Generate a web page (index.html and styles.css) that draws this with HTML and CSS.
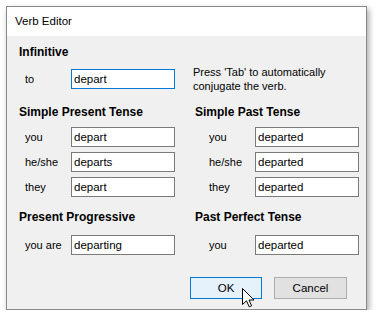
FILE: index.html
```html
<!DOCTYPE html>
<html>
<head>
<meta charset="utf-8">
<link rel="stylesheet" href="styles.css">
</head>
<body>
<div class="window">
  <div class="titlebar">Verb Editor</div>
  <div class="content">
    <div class="section sec-inf">
      <div class="heading">Infinitive</div>
      <div></div>
      <div class="field"><span class="lbl">to</span><input class="box focus" value="depart"></div>
      <div class="note">Press 'Tab' to automatically<br>conjugate the verb.</div>
    </div>
    <div class="section sec-simple">
      <div class="heading">Simple Present Tense</div>
      <div class="heading right">Simple Past Tense</div>
      <div class="field"><span class="lbl">you</span><input class="box" value="depart"></div>
      <div class="field right"><span class="lbl">you</span><input class="box" value="departed"></div>
      <div class="field"><span class="lbl">he/she</span><input class="box" value="departs"></div>
      <div class="field right"><span class="lbl">he/she</span><input class="box" value="departed"></div>
      <div class="field"><span class="lbl">they</span><input class="box" value="depart"></div>
      <div class="field right"><span class="lbl">they</span><input class="box" value="departed"></div>
    </div>
    <div class="section sec-prog">
      <div class="heading">Present Progressive</div>
      <div class="heading right">Past Perfect Tense</div>
      <div class="field"><span class="lbl">you are</span><input class="box" value="departing"></div>
      <div class="field right"><span class="lbl">you</span><input class="box" value="departed"></div>
    </div>
    <div class="buttons">
      <button class="btn default">OK</button>
      <button class="btn">Cancel</button>
    </div>
  </div>
</div>
<svg class="cursor" width="14" height="21" viewBox="0 0 14 21">
  <path d="M0.5 0.5 L0.5 16.5 L4.5 12.8 L7.2 18.8 L9.6 17.8 L7 12 L12 12 Z" fill="#fff" stroke="#000" stroke-width="1" stroke-linejoin="miter"/>
</svg>
</body>
</html>
```
FILE: styles.css
```css
html, body {
  margin: 0;
  padding: 0;
  background: #ffffff;
  font-family: "Liberation Sans", Arial, sans-serif;
  font-size: 11px;
  color: #000;
}

.window {
  position: relative;
  margin: 6px 0 0 6px;
  width: 361px;
  height: 304px;
  box-sizing: border-box;
  border: 1px solid #8a8a8a;
  background: #f0f0f0;
  box-shadow: 2px 3px 6px rgba(0, 0, 0, 0.35);
  display: flex;
  flex-direction: column;
}

.titlebar {
  height: 29px;
  line-height: 29px;
  background: #ffffff;
  padding-left: 8px;
  font-size: 11.5px;
}

.content {
  padding: 8px 19px 0 12px;
}

.section {
  display: grid;
  grid-template-columns: 176px 1fr;
  row-gap: 5px;
}

.heading {
  font-weight: bold;
  font-size: 12px;
  height: 16px;
  line-height: 16px;
  margin-bottom: 4px;
}

.sec-simple { margin-top: 15px; }
.sec-simple .heading { margin-bottom: 2px; }

.sec-prog { margin-top: 12px; }
.sec-prog .heading { margin-bottom: 5px; }

.field {
  display: flex;
  align-items: center;
  height: 20px;
}

.lbl {
  width: 46px;
  padding-left: 6px;
  flex: none;
}

.field.right .lbl {
  padding-left: 14px;
}

.box {
  width: 104px;
  height: 20px;
  box-sizing: border-box;
  border: 1px solid #7a7a7a;
  padding: 0 2px;
  margin: 0;
  font-family: "Liberation Sans", Arial, sans-serif;
  font-size: 11.5px;
  color: #000;
  background: #fff;
  outline: none;
}

.box.focus {
  border-color: #0078d7;
}

.note {
  margin-left: -2px;
  margin-top: -4px;
  margin-bottom: -4px;
  line-height: 14px;
}

.buttons {
  display: flex;
  justify-content: flex-end;
  gap: 12px;
  margin-top: 22px;
}

.btn {
  height: 22px;
  width: 72px;
  box-sizing: border-box;
  border: 1px solid #adadad;
  background: #e1e1e1;
  font-family: "Liberation Sans", Arial, sans-serif;
  font-size: 11.5px;
  color: #000;
  padding: 0;
  margin: 0;
}

.btn + .btn {
  width: 73px;
}

.btn.default {
  border-color: #0078d7;
  background: #e5f1fb;
}

.cursor {
  position: absolute;
  left: 242px;
  top: 288px;
}
```
